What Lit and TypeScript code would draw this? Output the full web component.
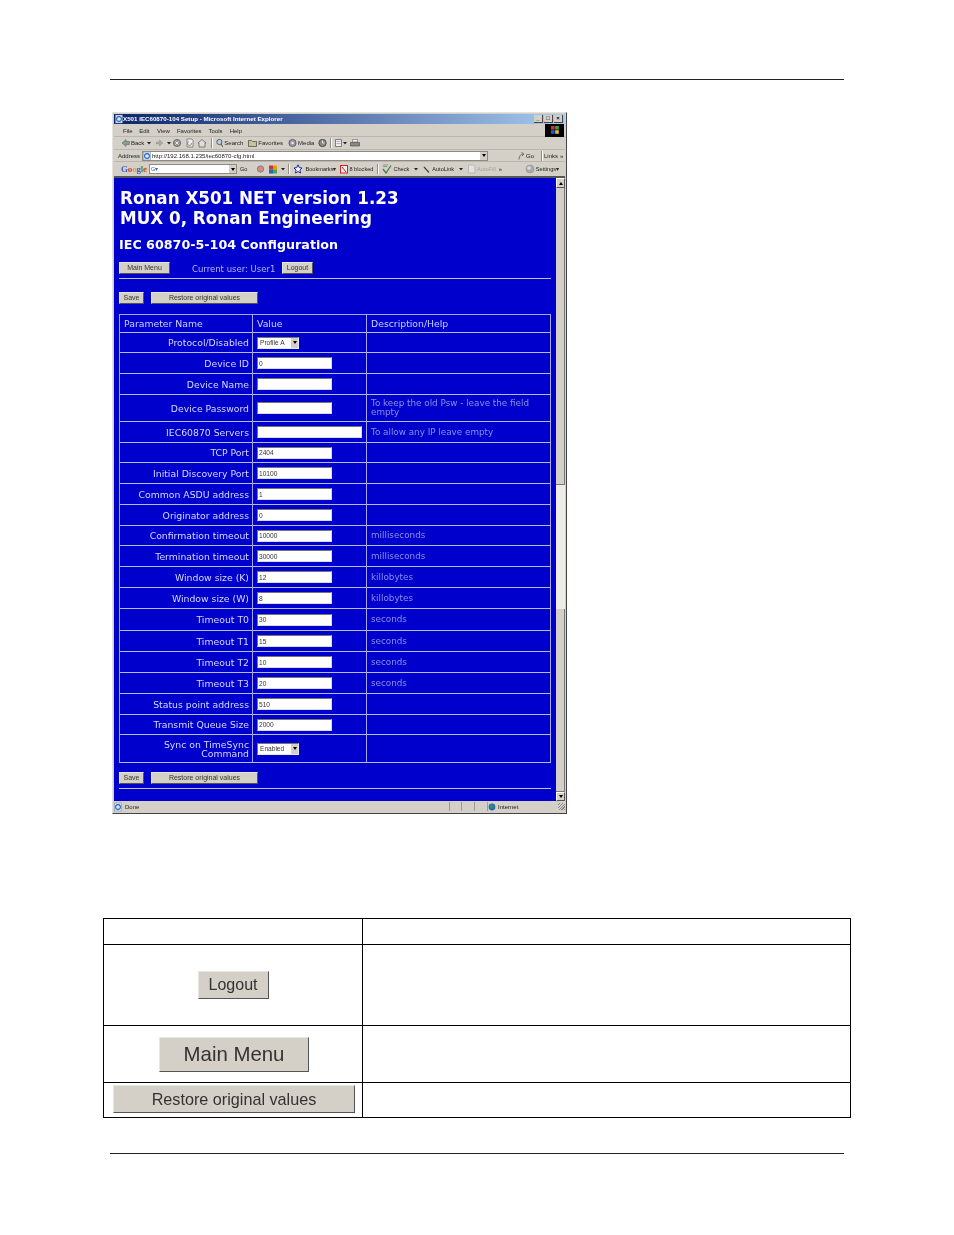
import { LitElement, html, css, svg } from "lit";
import { customElement } from "lit/decorators.js";

type Row = { label: string; value?: string; sel?: string; wide?: boolean; desc?: string; two?: boolean };

const ROWS: Row[] = [
  { label: "Protocol/Disabled", sel: "Profile A" },
  { label: "Device ID", value: "0" },
  { label: "Device Name", value: "" },
  { label: "Device Password", value: "", desc: "To keep the old Psw - leave the field empty" },
  { label: "IEC60870 Servers", value: "", wide: true, desc: "To allow any IP leave empty" },
  { label: "TCP Port", value: "2404" },
  { label: "Initial Discovery Port", value: "10100" },
  { label: "Common ASDU address", value: "1" },
  { label: "Originator address", value: "0" },
  { label: "Confirmation timeout", value: "10000", desc: "milliseconds" },
  { label: "Termination timeout", value: "30000", desc: "milliseconds" },
  { label: "Window size (K)", value: "12", desc: "killobytes" },
  { label: "Window size (W)", value: "8", desc: "killobytes" },
  { label: "Timeout T0", value: "30", desc: "seconds" },
  { label: "Timeout T1", value: "15", desc: "seconds" },
  { label: "Timeout T2", value: "10", desc: "seconds" },
  { label: "Timeout T3", value: "20", desc: "seconds" },
  { label: "Status point address", value: "510" },
  { label: "Transmit Queue Size", value: "2000" },
  { label: "Sync on TimeSync Command", sel: "Enabled" },
];

const ico = (w: number, body: unknown) =>
  html`<svg class="ico" width=${w} height="10" viewBox="0 0 ${w} 10">${body}</svg>`;

const ICONS = {
  back: ico(8, svg`<path d="M0 5 4 1.5V3.5H7.5V6.5H4V8.5Z" fill="#8aa08a" stroke="#556" stroke-width=".5"/>`),
  fwd: ico(7, svg`<path d="M7 5 3.5 2V4H0V6H3.5V8Z" fill="#aaa" stroke="#888" stroke-width=".4"/>`),
  drop: ico(4, svg`<path d="M0 4H4L2 6.5Z" fill="#222"/>`),
  stop: ico(8, svg`<circle cx="4" cy="5" r="3.6" fill="#999" stroke="#555" stroke-width=".7"/><path d="M2.5 3.5 5.5 6.5M5.5 3.5 2.5 6.5" stroke="#eee" stroke-width=".9"/>`),
  page: ico(8, svg`<path d="M1 1H6L7 2.5V9H1Z" fill="#eee" stroke="#666" stroke-width=".7"/><path d="M3 3.5A2 2 0 1 0 5.5 5" fill="none" stroke="#777" stroke-width=".8"/>`),
  home: ico(8, svg`<path d="M0 5 4 1.5 8 5H7V9H1V5Z" fill="#ddd" stroke="#555" stroke-width=".7"/>`),
  search: ico(7, svg`<circle cx="3.4" cy="4" r="2.6" fill="#bcd" stroke="#444" stroke-width=".8"/><path d="M5 6 7 9" stroke="#444" stroke-width="1"/>`),
  fav: ico(9, svg`<path d="M.5 2.5H3.5L4.5 3.5H8.5V8.5H.5Z" fill="#c9c39c" stroke="#444" stroke-width=".7"/>`),
  media: ico(9, svg`<circle cx="4.5" cy="5" r="3.6" fill="#99a" stroke="#444" stroke-width=".7"/><circle cx="4.5" cy="5" r="1.2" fill="#eee"/>`),
  hist: ico(9, svg`<circle cx="4.5" cy="5" r="3.7" fill="#888" stroke="#333" stroke-width=".7"/><path d="M4.5 2.5V5H6.5" stroke="#fff" stroke-width=".8" fill="none"/>`),
  mail: ico(8, svg`<path d="M.5 1.5H6.5V8.5H.5Z" fill="#eee" stroke="#555" stroke-width=".7"/><path d="M1.5 3.5H5.5M1.5 5.5H5.5" stroke="#889" stroke-width=".6"/>`),
  print: ico(10, svg`<path d="M2.5 1.5H7.5V4H2.5Z" fill="#eee" stroke="#555" stroke-width=".5"/><path d="M.5 4.5H9.5V8H.5Z" fill="#888" stroke="#444" stroke-width=".6"/>`),
  ie: ico(8, svg`<rect x=".5" y="1" width="7" height="8" fill="#dfe8f5" stroke="#6a86b0" stroke-width=".5"/><circle cx="4" cy="5" r="2.4" fill="none" stroke="#2a62c0" stroke-width="1.1"/>`),
  go: ico(7, svg`<path d="M1 8.5C1 5 3 3 5 3M3.5 1.5 6 3 4 5" fill="none" stroke="#555" stroke-width=".8"/>`),
  gicons: ico(9, svg`<circle cx="4.5" cy="5" r="3.2" fill="#d87" stroke="#68a" stroke-width="1"/>`),
  gicons2: ico(10, svg`<rect x="1" y="1.5" width="4" height="4" fill="#c33"/><rect x="5" y="1.5" width="4" height="4" fill="#e90"/><rect x="1" y="5.5" width="4" height="4" fill="#26b"/><rect x="5" y="5.5" width="4" height="4" fill="#4a4"/>`),
  star: ico(8, svg`<path d="M4 .8 5.2 3.6 8 4 5.9 6 6.5 9 4 7.5 1.5 9 2.1 6 0 4 2.8 3.6Z" fill="#fff" stroke="#22a" stroke-width="1"/>`),
  block: ico(8, svg`<rect x=".5" y="1.5" width="7" height="7.5" fill="#eee" stroke="#c22" stroke-width="1"/><path d="M2 3 6 8" stroke="#c22" stroke-width="1"/>`),
  check: ico(10, svg`<path d="M1 1H6M1 2.6H5" stroke="#777" stroke-width=".7"/><path d="M1 5 4 9 9 1.5" fill="none" stroke="#3a8a3a" stroke-width="1.3"/>`),
  link: ico(10, svg`<path d="M1 2 4 4" stroke="#cc9" stroke-width="1.4"/><path d="M3 3 8 8.5" stroke="#444" stroke-width="1.2"/>`),
  fill: ico(9, svg`<path d="M1.5 1H6.5L8 3V9H1.5Z" fill="#e4e2dc" stroke="#aaa" stroke-width=".7"/>`),
  settings: ico(10, svg`<circle cx="5" cy="5" r="4" fill="#aaa" stroke="#888" stroke-width=".5"/><circle cx="4" cy="4" r="1.8" fill="#ddd"/>`),
  globe: ico(8, svg`<circle cx="4" cy="5" r="3.4" fill="#2a6ab8"/><path d="M2 3 4 3 5 5 3 7ZM5 3 7 4 6 6Z" fill="#3a9a3a"/>`),
  flag: html`<svg width="8" height="8" viewBox="0 0 8 8"><rect width="3.6" height="3.6" fill="#c33"/><rect x="4.2" width="3.6" height="3.6" fill="#3a3"/><rect y="4.2" width="3.6" height="3.6" fill="#35b"/><rect x="4.2" y="4.2" width="3.6" height="3.6" fill="#db3"/></svg>`,
};

@customElement("app-root")
export class AppRoot extends LitElement {
  static styles = css`
    :host { display: block; width: 954px; height: 1235px; background: #fff; overflow: hidden; font-family: "Liberation Sans", sans-serif; }
    .rule { height: 1px; background: #222; margin: 0 110px; }
    .rule.top { margin-top: 79px; }
    .rule.bottom { margin-top: 35px; }

    .win { box-sizing: border-box; width: 455px; height: 702px; margin: 32px 0 0 112px; background: #d4d0c8; padding: 1px;
      border: 1px solid; border-color: #e4e2dc #444 #444 #e4e2dc; display: flex; flex-direction: column; filter: blur(.35px); }
    .title { height: 10px; background: linear-gradient(90deg, #0a246a, #a6caf0); display: flex; align-items: center; color: #fff; font-size: 6.2px; font-weight: 700; padding-left: 1px; white-space: nowrap; }
    .title .ttl { margin-bottom: 2px; }
    .title .tb { margin-left: auto; display: flex; gap: 1px; padding-right: 2px; }
    .tbtn { width: 8px; height: 7px; background: #d4d0c8; border-right: 1px solid #444; border-bottom: 1px solid #444; color: #000; font-size: 6px; line-height: 7px; text-align: center; font-weight: 700; }
    .bar { display: flex; align-items: center; font-size: 6px; color: #222; white-space: nowrap; box-sizing: border-box; border-bottom: 1px solid #bbb7ad; }
    .bar .i { display: inline-flex; align-items: center; gap: 1px; }
    .ico { display: block; flex: none; }
    .menu { height: 13px; }
    .menu span { flex: none; margin-top: 2px; }
    .flagbox { margin-left: auto; width: 19px; height: 13px; background: #000; display: flex; align-items: center; justify-content: center; margin-right: 1px; }
    .tools { height: 13px; }
    .addr { height: 12px; }
    .goog { height: 14px; border-bottom: none; font-size: 5.6px; }
    .sep { width: 1px; height: 10px; background: #8e8b84; border-right: 1px solid #fff; flex: none; }
    .field { background: #fff; height: 10px; box-sizing: border-box; border: 1px solid #8e8b84; display: flex; align-items: center; flex: none; position: relative; }
    .field .txt { margin-left: 1px; color: #222; }
    .field .txt.b { color: #3a62c8; }
    .arrow { width: 8px; height: 100%; margin-left: auto; background: #d4d0c8; border-left: 1px solid #fff; box-sizing: border-box; display: flex; align-items: center; justify-content: center; flex: none; }
    .arrow::after { content: ""; border: 2px solid transparent; border-top: 3px solid #000; border-bottom: 0; }
    .gl { font-family: "Liberation Serif", serif; font-size: 9px; font-weight: 700; letter-spacing: -.2px; flex: none; width: 25px; }
    .b { color: #3a62c8; } .r { color: #d0402a; } .y { color: #d8a818; } .g { color: #3a9a3a; }
    .dim { color: #a5a29a; }
    .shade { height: 2px; background: #555; flex: none; }

    .view { display: flex; height: 623px; flex: none; }
    .page { width: 442px; background: #0000cc; box-sizing: border-box; padding: 10px 0 0 5px; color: #fff; font-family: "DejaVu Sans", sans-serif; }
    .h1 { font-size: 16.75px; line-height: 20px; font-weight: 700; white-space: nowrap; padding-left: 1px; }
    .h3 { font-size: 12.7px; line-height: 18px; font-weight: 700; margin-top: 8px; white-space: nowrap; }
    .btn { box-sizing: border-box; height: 12px; background: #d4d0c8; border: 1px solid; border-color: #e8e6e0 #55534e #55534e #e8e6e0; color: #333; font: 7px/10px "Liberation Sans", sans-serif; text-align: center; flex: none; }
    .row { display: flex; align-items: center; }
    .navrow { margin-top: 8px; height: 12px; }
    .user { font-size: 8.5px; line-height: 10px; color: #b4b4f0; margin: 2px 0 0 22px; width: 90px; white-space: nowrap; }
    .hr { height: 1px; width: 432px; background: #c0c0e8; margin-top: 4px; }
    .saves { margin-top: 13px; gap: 7px; }
    .saves.second { margin-top: 9px; }
    .w25 { width: 25px; } .w107 { width: 107px; } .w51 { width: 51px; } .w31 { width: 31px; margin-left: 0; }
    .grid { display: grid; width: 432px; box-sizing: border-box; margin-top: 10px; border-top: 1px solid #a8a8ec; border-left: 1px solid #a8a8ec;
      grid-template-columns: 133px 114px 184px;
      grid-template-rows: 18px 20px 21px 21px 27px 21px 20px 21px 21px 21px 20px 21px 21px 21px 22px 21px 21px 21px 21px 20px 28px; }
    .c { box-sizing: border-box; border-right: 1px solid #a8a8ec; border-bottom: 1px solid #b8b8f0; display: flex; align-items: center; font-size: 9.3px; line-height: 9px; padding: 0 4px; min-width: 0; }
    .hd { color: #d0d0f8; justify-content: flex-start; }
    .lab { justify-content: flex-end; text-align: right; color: #d8d8fc; padding-right: 3px; }
    .desc { color: #8e8ee8; font-size: 8.8px; }
    input { box-sizing: border-box; width: 75px; height: 12px; padding: 0 0 0 1px; margin: 0; background: #fff; outline: none; border: 1px solid; border-color: #77756f #d8d8e8 #d8d8e8 #77756f; color: #333; font: 6.6px "Liberation Sans", sans-serif; border-radius: 0; }
    input.wide { width: 106px; }
    .sel { box-sizing: border-box; width: 42px; height: 12px; background: #fff; border: 1px solid; border-color: #77756f #e8e8f0 #e8e8f0 #77756f; color: #333; font: 6.6px "Liberation Sans", sans-serif; display: flex; align-items: center; padding-left: 2px; }

    .sb { width: 9px; display: flex; flex-direction: column; flex: none; }
    .sb div { flex: none; box-sizing: border-box; }
    .sbb { background: #d4d0c8; border: 1px solid; border-color: #fff #555 #555 #fff; display: flex; align-items: center; justify-content: center; }
    .sbb.up::after { content: ""; border: 2px solid transparent; border-bottom: 3px solid #000; border-top: 0; }
    .sbb.dn::after { content: ""; border: 2px solid transparent; border-top: 3px solid #000; border-bottom: 0; }
    .thumb { background: #d4d0c8; border-right: 1px solid #777; border-bottom: 1px solid #777; }
    .trk { background: #eeece6; }
    .status { height: 11px; display: flex; align-items: center; font-size: 6px; color: #222; flex: none; }
    .status .cell { box-sizing: border-box; height: 9px; border-left: 1px solid #9c9a92; flex: none; }
    .grip { width: 7px; height: 7px; margin-left: auto; background: repeating-linear-gradient(135deg, #d4d0c8 0 1px, #888 1px 2px); }

    .doc { display: grid; width: 748px; box-sizing: border-box; margin: 104px 0 0 103px; border-top: 1px solid #000; border-left: 1px solid #000;
      grid-template-columns: 259px 488px; grid-template-rows: 26px 81px 57px 35px; }
    .d { box-sizing: border-box; border-right: 1px solid #000; border-bottom: 1px solid #000; display: flex; align-items: center; justify-content: center; }
    .big { box-sizing: border-box; background: #d4d0c8; border: 1px solid; border-color: #e8e6e0 #555 #555 #e8e6e0; color: #333; font-family: "Liberation Sans", sans-serif; display: flex; align-items: center; justify-content: center; flex: none; filter: blur(.3px); }
    .b1 { width: 71px; height: 28px; font-size: 16px; }
    .b2 { width: 150px; height: 35px; font-size: 20.4px; margin-left: 2px; }
    .b3 { width: 242px; height: 28px; font-size: 16.2px; margin: 0 0 2px 2px; }
  `;

  private tool(icon: unknown, text: string, ml: number, cls = "") {
    return html`<span class="i ${cls}" style="margin-left:${ml}px">${icon}${text}</span>`;
  }

  private saveRow(second = false) {
    return html`<div class="row saves ${second ? "second" : ""}">
      <div class="btn w25">Save</div><div class="btn w107">Restore original values</div>
    </div>`;
  }

  render() {
    const t = this.tool;
    return html`
      <div class="rule top"></div>
      <div class="win">
        <div class="title">
          ${ICONS.ie}<span class="ttl">X501 IEC60870-104 Setup - Microsoft Internet Explorer</span>
          <div class="tb"><div class="tbtn">_</div><div class="tbtn">□</div><div class="tbtn">×</div></div>
        </div>
        <div class="bar menu">
          ${[["File", 9], ["Edit", 6.5], ["View", 7.5], ["Favorites", 7], ["Tools", 7], ["Help", 7]].map(
            ([m, ml]) => html`<span style="margin-left:${ml}px">${m}</span>`)}
          <div class="flagbox">${ICONS.flag}</div>
        </div>
        <div class="bar tools">
          ${t(ICONS.back, "Back", 8)}${t(ICONS.drop, "", 3)}${t(ICONS.fwd, "", 5)}${t(ICONS.drop, "", 4)}
          ${t(ICONS.stop, "", 2)}${t(ICONS.page, "", 5)}${t(ICONS.home, "", 4)}
          <span class="sep" style="margin-left:5px"></span>
          ${t(ICONS.search, "Search", 3)}${t(ICONS.fav, "Favorites", 5)}${t(ICONS.media, "Media", 5)}
          ${t(ICONS.hist, "", 4)}<span class="sep" style="margin-left:3px"></span>
          ${t(ICONS.mail, "", 3)}${t(ICONS.drop, "", 0)}${t(ICONS.print, "", 3)}
        </div>
        <div class="bar addr">
          <span style="margin-left:4px">Address</span>
          <div class="field" style="width:346px;margin-left:2px">${ICONS.ie}<span class="txt">http://192.168.1.235/iec60870-cfg.html</span><span class="arrow"></span></div>
          ${t(ICONS.go, "Go", 30)}<span class="sep" style="margin-left:7px"></span>
          <span style="margin-left:1px">Links</span><span style="margin-left:2px">»</span>
        </div>
        <div class="bar goog">
          <span class="gl" style="margin-left:7px"><span class="b">G</span><span class="r">o</span><span class="y">o</span><span class="b">g</span><span class="g">l</span><span class="r">e</span></span>
          <div class="field" style="width:88px;margin-left:3px"><span class="txt b">G▾</span><span class="arrow"></span></div>
          <span style="margin-left:3px">Go</span>${t(ICONS.gicons, "", 9)}${t(ICONS.gicons2, "", 3)}${t(ICONS.drop, "", 3)}
          <span class="sep" style="margin-left:3px"></span>
          ${t(ICONS.star, "", 4)}<span style="margin-left:3px">Bookmarks▾</span>
          ${t(ICONS.block, "8 blocked", 4)}<span class="sep" style="margin-left:4px"></span>
          ${t(ICONS.check, "Check", 3)}${t(ICONS.drop, "", 5)}
          ${t(ICONS.link, "AutoLink", 3)}${t(ICONS.drop, "", 5)}
          ${t(ICONS.fill, "AutoFill", 4, "dim")}<span style="margin-left:3px">»</span>
          ${t(ICONS.settings, "Settings▾", 23)}
        </div>
        <div class="shade"></div>
        <div class="view">
          <div class="page">
            <div class="h1">Ronan X501 NET version 1.23<br />MUX 0, Ronan Engineering</div>
            <div class="h3">IEC 60870-5-104 Configuration</div>
            <div class="row navrow">
              <div class="btn w51">Main Menu</div>
              <div class="user">Current user: User1</div>
              <div class="btn w31">Logout</div>
            </div>
            <div class="hr"></div>
            ${this.saveRow()}
            <div class="grid">
              <div class="c hd">Parameter Name</div><div class="c hd">Value</div><div class="c hd">Description/Help</div>
              ${ROWS.map((r) => html`
                <div class="c lab">${r.label}</div>
                <div class="c">${r.sel
                  ? html`<div class="sel">${r.sel}<span class="arrow"></span></div>`
                  : html`<input class=${r.wide ? "wide" : ""} .value=${r.value ?? ""} />`}</div>
                <div class="c desc">${r.desc ?? ""}</div>`)}
            </div>
            ${this.saveRow(true)}
            <div class="hr"></div>
          </div>
          <div class="sb">
            <div class="sbb up" style="height:10px"></div>
            <div class="thumb" style="height:297px"></div>
            <div class="trk" style="height:124px"></div>
            <div class="thumb" style="height:183px"></div>
            <div class="sbb dn" style="height:9px"></div>
          </div>
        </div>
        <div class="status">
          ${ICONS.ie}<span style="margin-left:3px;width:324px">Done</span>
          <span class="cell" style="width:12px"></span><span class="cell" style="width:13px"></span><span class="cell" style="width:13px"></span>
          <span class="cell" style="width:1px"></span>${ICONS.globe}<span style="margin-left:2px">Internet</span>
          <span class="grip"></span>
        </div>
      </div>
      <div class="doc">
        <div class="d"></div><div class="d"></div>
        <div class="d"><div class="big b1">Logout</div></div><div class="d"></div>
        <div class="d"><div class="big b2">Main Menu</div></div><div class="d"></div>
        <div class="d"><div class="big b3">Restore original values</div></div><div class="d"></div>
      </div>
      <div class="rule bottom"></div>
    `;
  }
}
